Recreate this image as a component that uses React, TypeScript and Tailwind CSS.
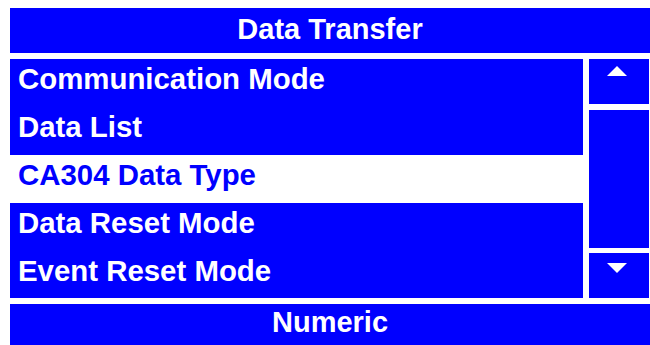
import React from "react";

const rows = [
  "Communication Mode",
  "Data List",
  "CA304 Data Type",
  "Data Reset Mode",
  "Event Reset Mode",
];

export default function App() {
  return (
    <div
      className="w-[650px] h-[345px] bg-white overflow-hidden pl-[10px] pt-[8px] flex flex-col"
      style={{ fontFamily: '"Liberation Sans", Arial, sans-serif' }}
    >
      <div className="w-[640px] h-[45px] shrink-0 bg-[#0000ff] text-white font-bold text-[29px] leading-[29px] flex justify-center items-start pt-[7px]">
        Data Transfer
      </div>
      <div className="mt-[6px] h-[239px] shrink-0 flex gap-[6px]">
        <div className="w-[573px] flex flex-col">
          {rows.map((r, i) => {
            const selected = i === 2;
            return (
              <div
                key={r}
                className={
                  (i === 4 ? "h-[47px] " : "h-[48px] ") +
                  (selected ? "bg-white text-[#0000ff] " : "bg-[#0000ff] text-white ") +
                  "shrink-0 font-bold text-[29.4px] leading-[29px] pl-[8px] pt-[5px] whitespace-nowrap"
                }
              >
                {r}
              </div>
            );
          })}
        </div>
        <div className="w-[60px] flex flex-col">
          <div className="h-[45px] shrink-0 bg-[#0000ff] flex justify-center pt-[7px] pr-[4px]">
            <svg width="20" height="10" viewBox="0 0 20 10">
              <polygon points="10,0 20,10 0,10" fill="white" />
            </svg>
          </div>
          <div className="mt-[6px] h-[138px] shrink-0 bg-[#0000ff]" />
          <div className="mt-[5px] h-[45px] shrink-0 bg-[#0000ff] flex justify-center pt-[10px] pr-[4px]">
            <svg width="20" height="10" viewBox="0 0 20 10">
              <polygon points="0,0 20,0 10,10" fill="white" />
            </svg>
          </div>
        </div>
      </div>
      <div className="mt-[6px] w-[640px] h-[45px] shrink-0 bg-[#0000ff] text-white font-bold text-[29px] leading-[29px] flex justify-center items-start pt-[4px]">
        Numeric
      </div>
    </div>
  );
}
